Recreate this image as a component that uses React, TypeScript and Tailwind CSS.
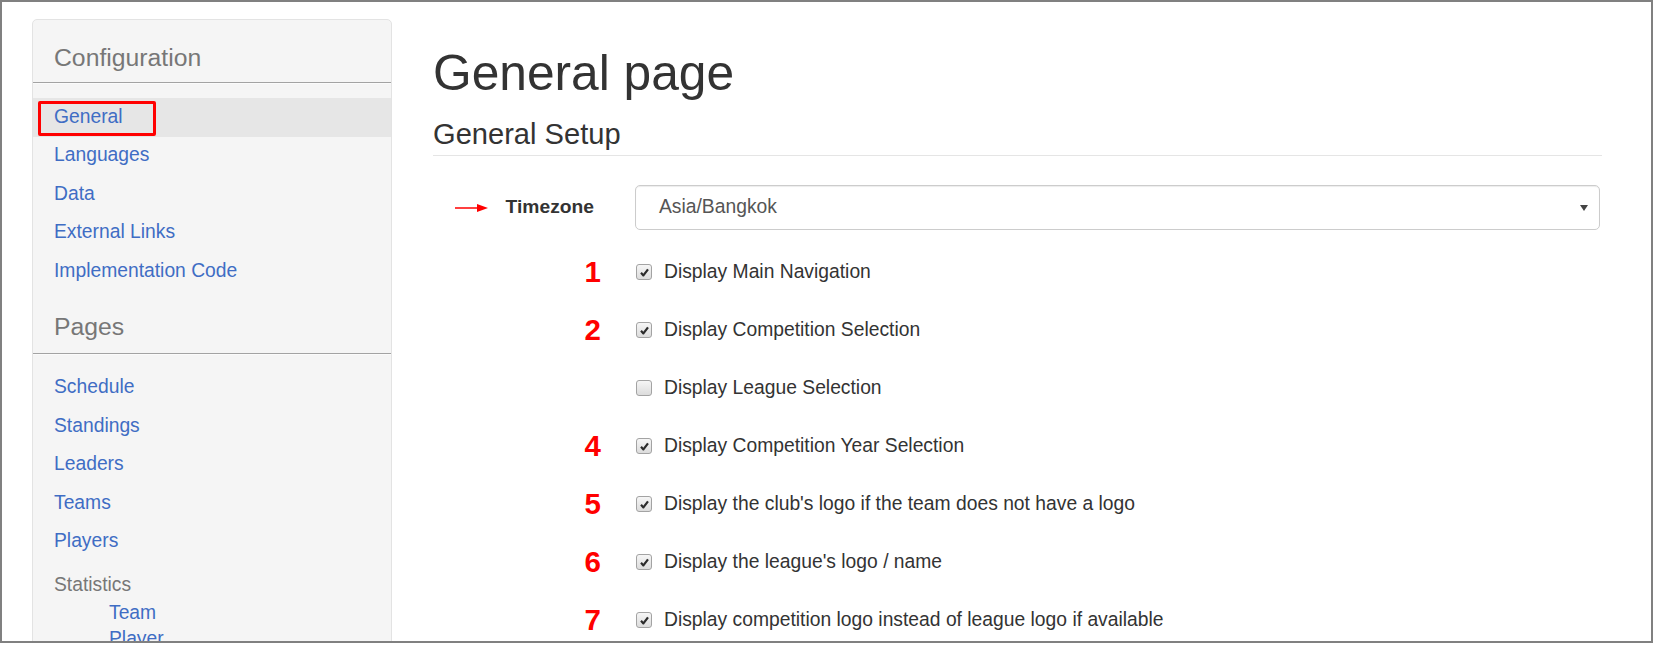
import React from "react";

const configLinks = ["General", "Languages", "Data", "External Links", "Implementation Code"];
const pageLinks = ["Schedule", "Standings", "Leaders", "Teams", "Players"];

const options = [
  { n: "1", label: "Display Main Navigation", checked: true },
  { n: "2", label: "Display Competition Selection", checked: true },
  { n: "", label: "Display League Selection", checked: false },
  { n: "4", label: "Display Competition Year Selection", checked: true },
  { n: "5", label: "Display the club's logo if the team does not have a logo", checked: true },
  { n: "6", label: "Display the league's logo / name", checked: true },
  { n: "7", label: "Display competition logo instead of league logo if available", checked: true },
];

function Check({ checked }: { checked: boolean }) {
  return (
    <span className="flex h-4 w-4 shrink-0 items-center justify-center rounded-[3px] border border-[#a3a3a3] bg-linear-to-b from-[#f6f6f6] to-[#dcdcdc]">
      {checked && (
        <svg viewBox="0 0 12 12" className="h-[11px] w-[11px]">
          <path d="M2.2 6.4 L4.8 9.2 L9.8 2.6" fill="none" stroke="#2b2b2b" strokeWidth="2.4" strokeLinejoin="round" />
        </svg>
      )}
    </span>
  );
}

function SideHeading({ children, pad }: { children: React.ReactNode; pad: string }) {
  return (
    <>
      <h4 className={pad + " pl-[21px] text-[24.75px] leading-[27px] text-[#777]"}>{children}</h4>
      <div className="h-px bg-[#a3a3a3]" />
      <div className="h-px bg-[#fbfbfb]" />
    </>
  );
}

function Sidebar() {
  return (
    <aside className="w-[360px] shrink-0 rounded-[5px] border border-[#e3e3e3] bg-[#f5f5f5] pb-10 text-[19.3px]">
      <SideHeading pad="pt-[24px] pb-[11px]">Configuration</SideHeading>
      <ul className="pt-[14px]">
        {configLinks.map((l, i) => (
          <li
            key={l}
            className={
              "relative flex h-[38.5px] items-center pl-[21px] text-[#3f6dc4] " +
              (i === 0 ? "bg-[#e6e6e6]" : "")
            }
          >
            {l}
            {i === 0 && (
              <span className="absolute left-[5px] top-[3px] h-[35px] w-[118px] rounded-[2px] border-[3px] border-[#ff0000]" />
            )}
          </li>
        ))}
      </ul>
      <SideHeading pad="pt-[22px] pb-[13px]">Pages</SideHeading>
      <ul className="pt-[14px]">
        {pageLinks.map((l) => (
          <li key={l} className="flex h-[38.5px] items-center pl-[21px] text-[#3f6dc4]">
            {l}
          </li>
        ))}
      </ul>
      <div className="pl-[21px] pt-[10px] leading-[27px] text-[#777]">Statistics</div>
      <div className="mt-[2px] pl-[76px] leading-[26px] text-[#3f6dc4]">Team</div>
      <div className="pl-[76px] leading-[26px] text-[#3f6dc4]">Player</div>
    </aside>
  );
}

function Main() {
  return (
    <main className="ml-[41px] w-[1169px] pt-[27px] text-[#333]">
      <h1 className="text-[49.7px] leading-[54px]">General page</h1>
      <div className="mt-[14px] border-b border-[#e5e5e5] text-[29.1px] leading-[41px]">General Setup</div>

      <div className="mt-[29px] flex items-center">
        <div className="flex w-[202px] items-center justify-end gap-[17px] pr-[41px]">
          <svg viewBox="0 0 34 10" className="h-[10px] w-[34px]">
            <line x1="0" y1="5" x2="24" y2="5" stroke="#ff0000" strokeWidth="1.5" />
            <path d="M22 1 L33 5 L22 9 Z" fill="#ff0000" />
          </svg>
          <span className="text-[19.25px] font-bold">Timezone</span>
        </div>
        <div className="flex h-[45px] w-[965px] items-center justify-between rounded-[5px] border border-[#cccccc] bg-white pl-[23px] pr-[11px] text-[19.3px] text-[#555] shadow-[inset_0_1px_1px_rgba(0,0,0,0.075)]">
          <span>Asia/Bangkok</span>
          <svg viewBox="0 0 8 6" className="h-[6px] w-[8px]">
            <path d="M0 0 L8 0 L4 6 Z" fill="#444" />
          </svg>
        </div>
      </div>

      <div className="mt-[13px]">
        {options.map((o) => (
          <div key={o.label} className="flex h-[58px] items-center">
            <div className="w-[202px] pr-[34px] text-right text-[29.5px] font-bold leading-none text-[#ff0000]">
              {o.n}
            </div>
            <div className="flex items-center gap-[12px] pl-px">
              <Check checked={o.checked} />
              <span className="text-[19.3px]">{o.label}</span>
            </div>
          </div>
        ))}
      </div>
    </main>
  );
}

export default function App() {
  return (
    <div className="h-[656px] w-[1654px] bg-white font-['Liberation_Sans',Arial,sans-serif]">
      <div className="h-[643px] w-[1653px] overflow-hidden border-2 border-[#808080] bg-white">
        <div className="flex items-start pl-[30px] pt-[17px]">
          <Sidebar />
          <Main />
        </div>
      </div>
    </div>
  );
}
